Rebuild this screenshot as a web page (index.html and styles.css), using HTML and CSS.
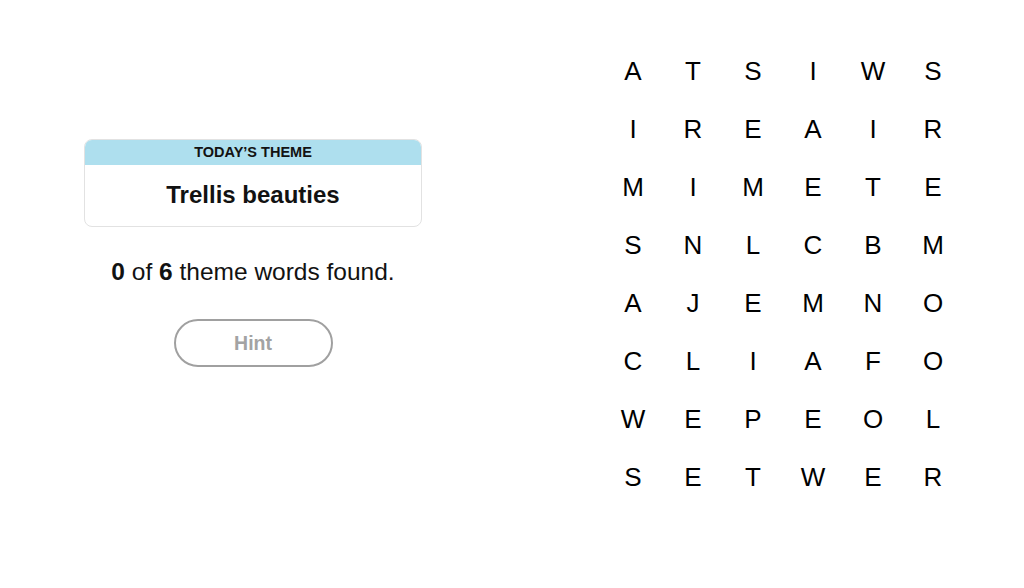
FILE: index.html
```html
<!DOCTYPE html>
<html>
<head>
  <title>Strands</title>
  <link rel="stylesheet" href="styles.css">
</head>
<body>
  <div class="game">
    <div class="side">
      <div class="theme-card">
        <div class="theme-label">TODAY’S THEME</div>
        <div class="theme-name">Trellis beauties</div>
      </div>
      <p class="progress"><b>0</b> of <b>6</b> theme words found.</p>
      <button class="hint" disabled>Hint</button>
    </div>

    <div class="board">
      <span>A</span><span>T</span><span>S</span><span>I</span><span>W</span><span>S</span>
      <span>I</span><span>R</span><span>E</span><span>A</span><span>I</span><span>R</span>
      <span>M</span><span>I</span><span>M</span><span>E</span><span>T</span><span>E</span>
      <span>S</span><span>N</span><span>L</span><span>C</span><span>B</span><span>M</span>
      <span>A</span><span>J</span><span>E</span><span>M</span><span>N</span><span>O</span>
      <span>C</span><span>L</span><span>I</span><span>A</span><span>F</span><span>O</span>
      <span>W</span><span>E</span><span>P</span><span>E</span><span>O</span><span>L</span>
      <span>S</span><span>E</span><span>T</span><span>W</span><span>E</span><span>R</span>
    </div>
  </div>
</body>
</html>
```
FILE: styles.css
```css
body {
  margin: 0;
  background-color: #fff;
  color: #121212;
  font-family: "Liberation Sans", Arial, sans-serif;
}
.game {
  display: flex;
  gap: 181px;
  padding: 42px 0 0 84px;
}
.side {
  width: 338px;
  margin-top: 97px;
  display: flex;
  flex-direction: column;
  align-items: center;
}
.theme-card {
  width: 100%;
  box-sizing: border-box;
  border: 1px solid #e2e2e2;
  border-radius: 8px;
  overflow: hidden;
  text-align: center;
}
.theme-label {
  background-color: #aedfee;
  height: 25px;
  line-height: 24px;
  font-size: 14.5px;
  font-weight: bold;
}
.theme-name {
  height: 61px;
  line-height: 60px;
  font-size: 24px;
  font-weight: bold;
}
.progress {
  margin: 30px 0 0;
  font-size: 24.5px;
  line-height: 30px;
}
.hint {
  margin-top: 32px;
  width: 159px;
  height: 48px;
  border: 2px solid #a0a0a0;
  border-radius: 24px;
  background: #fff;
  color: #a3a3a3;
  font-family: inherit;
  font-size: 19.5px;
  font-weight: bold;
}
.board {
  display: grid;
  grid-template-columns: repeat(6, 60px);
  grid-auto-rows: 58px;
  font-size: 26px;
  color: #000;
}
.board span {
  display: flex;
  align-items: center;
  justify-content: center;
}
```
